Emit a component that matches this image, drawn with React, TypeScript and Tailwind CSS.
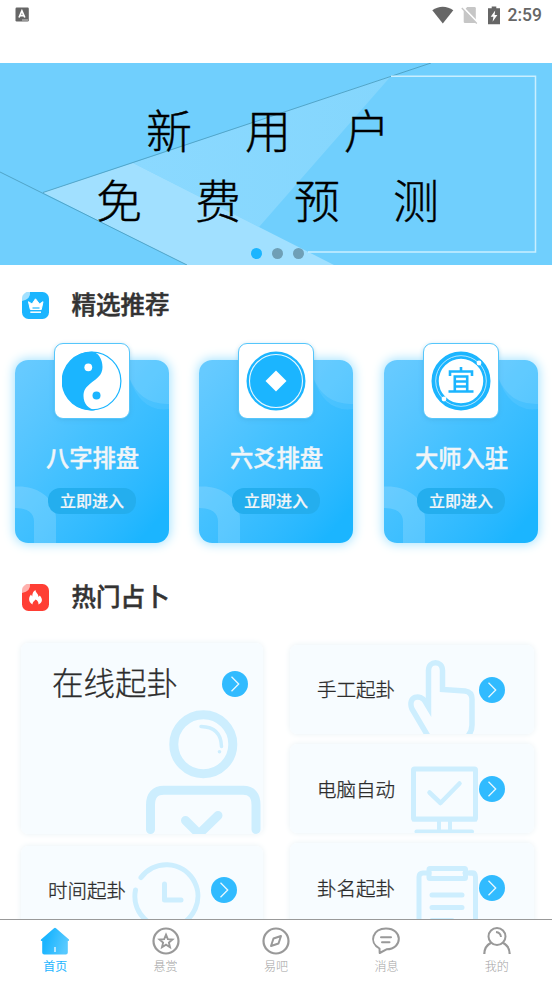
import type { ReactNode } from "react";

const PALE = "#cdeefe";
const BLUE = "#1bb5ff";

function StatusBar() {
  return (
    <div className="flex h-[63px] items-start justify-between pl-[15px] pr-[10px]">
      <svg className="mt-[7px]" width="15" height="15" viewBox="0 0 15 15">
        <rect x="0.5" y="0.5" width="13.3" height="14" rx="1.2" fill="#666" />
        <path d="M4 10.5 6.9 3.8 9.8 10.5M5 8.6h3.8" fill="none" stroke="#fff" strokeWidth="1.7" />
        <path d="M7 13h6" stroke="#ccc" />
      </svg>
      <div className="flex h-[30px] items-center">
        <svg width="22" height="18" viewBox="0 0 22 18">
          <path d="M0.3 4.3C6.5-.6 15 -.6 21.3 4.3L10.8 17.4Z" fill="#666" />
        </svg>
        <svg className="ml-[7px]" width="17" height="18" viewBox="0 0 17 18">
          <path d="M6.2 1H13.500q1.300 0 1.300 1.300v13.400q0 1.300-1.300 1.300H4q-1.300 0-1.300-1.300V4.800Z" fill="#c6c6c6" />
          <path d="M1.800 1.200 16.500 16.500" stroke="#fff" strokeWidth="2" />
          <path d="M.8 2 15.800 17.500" stroke="#c6c6c6" strokeWidth="1.400" />
        </svg>
        <svg className="ml-[10px]" width="12" height="19" viewBox="0 0 12 19">
          <path d="M3.700 0.500h4.600v1.700H12V18.200H0V2.200h3.700Z" fill="#666" />
          <path d="M7.200 4.500 2.700 10.800h2.700L4.600 15.800 9.400 9H6.600Z" fill="#fff" />
        </svg>
        <span className="ml-[8px] font-[Roboto] text-[17.500px] leading-[30px] font-medium text-[#666]">2:59</span>
      </div>
    </div>
  );
}

function Banner() {
  return (
    <div className="relative h-[202px] bg-[#70cffd]">
      <svg className="absolute inset-0" width="552" height="202" viewBox="0 0 552 202">
        <defs>
          <linearGradient id="ray" x1="0" y1="0" x2="1" y2="0">
            <stop offset="0" stopColor="#8bd9ff" />
            <stop offset="1" stopColor="#84d6fd" />
          </linearGradient>
        </defs>
        <path d="M133 100 391 13 259 164Z" fill="url(#ray)" />
        <path d="M43 129.500 133 100 334 202H187Z" fill="#a1e0ff" />
        <path d="M0 109 187 202M43 129.500 431 0" stroke="#4d9fc2" strokeWidth="0.900" fill="none" />
        <path d="M391 13.300H535.500V189H308" stroke="#c9efff" strokeWidth="1.500" fill="none" />
      </svg>
      <div className="relative flex flex-col pt-[30px] pl-[96px] text-[46px] leading-[70px] font-light text-black [-webkit-text-stroke:0.400px_#000]">
        <div className="flex gap-[53px] pl-[50px]">
          {["新", "用", "户"].map((c) => (
            <span key={c}>{c}</span>
          ))}
        </div>
        <div className="flex gap-[53px]">
          {["免", "费", "预", "测"].map((c) => (
            <span key={c}>{c}</span>
          ))}
        </div>
      </div>
      <div className="absolute bottom-[6px] left-[251px] flex gap-[10px]">
        <i className="size-[11px] rounded-full bg-[#1bb5ff]" />
        <i className="size-[11px] rounded-full bg-[#6f9fb6]" />
        <i className="size-[11px] rounded-full bg-[#6f9fb6]" />
      </div>
    </div>
  );
}

function Heading({ color, title, children }: { color: string; title: string; children: ReactNode }) {
  return (
    <div className="flex h-[36px] items-center pl-[22px]">
      <svg width="27" height="27" viewBox="0 0 27 27">
        <rect width="27" height="27" rx="6.500" fill={color} />
        <path d="M0 9V6.500Q0 0 6.500 0H8Q9 7 0 9Z" fill="#fff" opacity="0.6" />
        {children}
      </svg>
      <h2 className="-mt-[2px] ml-[22.500px] text-[24.500px] leading-[36px] font-medium text-[#333] [-webkit-text-stroke:0.500px_#333]">
        {title}
      </h2>
    </div>
  );
}

function YinYang() {
  return (
    <svg width="60" height="60" viewBox="0 0 60 60">
      <circle cx="30" cy="30" r="28.900" fill="#fff" stroke={BLUE} strokeWidth="1.200" />
      <path
        d="M30 .7C36 1 40.500 8 40.500 16C40.500 24 35 27.500 29 32C24 36 21.500 39 21.500 45C21.500 53 27 58 33 59.200A29.400 29.400 0 1 1 30 .7Z"
        fill={BLUE}
      />
      <circle cx="26.300" cy="16.300" r="3.900" fill="#fff" />
      <circle cx="34.500" cy="44.500" r="4" fill={BLUE} />
    </svg>
  );
}

function Coin() {
  return (
    <svg width="60" height="60" viewBox="0 0 60 60">
      <circle cx="30" cy="30" r="29.500" fill={BLUE} />
      <circle cx="30" cy="30" r="26.500" fill="none" stroke="#e6f7ff" strokeWidth="1.100" />
      <path d="M30 19.500 40.500 30 30 40.500 19.500 30Z" fill="#fff" />
    </svg>
  );
}

function Seal() {
  return (
    <svg width="60" height="60" viewBox="0 0 60 60">
      <circle cx="30" cy="30" r="26.500" fill="#fff" stroke={BLUE} strokeWidth="6" />
      <circle cx="30" cy="30" r="25.300" fill="none" stroke="#c5ecff" strokeWidth="0.900" />
      <circle cx="30" cy="30" r="23.200" fill="none" stroke={BLUE} strokeWidth="1.900" />
      <circle cx="48" cy="12" r="2.400" fill="#fff" />
      <circle cx="13" cy="48" r="2.400" fill="#fff" />
      <g fill="none" stroke={BLUE} strokeWidth="2.600">
        <path d="M30 16v4M19 25v-4.500h22V25M17.500 40.500h25M23.800 40V25.500h12.400V40M24 30.500h12M24 35.500h12" />
      </g>
    </svg>
  );
}

function FeatureCard({ title, children }: { title: string; children: ReactNode }) {
  return (
    <div className="relative flex h-[183px] w-[154px] flex-col items-center rounded-[13px] bg-linear-to-br from-[#66caff] from-5% via-[#44c1ff] via-45% to-[#1bb5ff] to-90% shadow-[0_0_11px_1px_#a2e2ff]">
      <svg className="absolute inset-0" width="154" height="183" viewBox="0 0 154 183">
        <path d="M114 0H141Q154 0 154 13V49Q126 53 114 17Z" fill="#fff" opacity="0.07" />
        <path d="M114 0H141Q154 0 154 13V44Q125 45 114 17Z" fill="#fff" opacity="0.10" />
        <path d="M0 126.500C25 125 41 140 41 159V183H19V162Q19 148 0 148Z" fill="#fff" opacity="0.16" />
      </svg>
      <div className="relative -mt-[17px] flex size-[76px] shrink-0 items-center justify-center rounded-[9px] border-[1.500px] border-[#55c6fb] bg-white shadow-[0_1px_4px_#3c9ccc55]">
        {children}
      </div>
      <div className="relative mt-[21px] pl-[1px] text-[23.300px] leading-[35px] font-medium text-[#f1f5f8] [-webkit-text-stroke:0.400px_#f1f5f8]">
        {title}
      </div>
      <div className="relative mt-[13px] h-[26px] w-[88px] rounded-[12px] bg-[#24aeee] text-center text-[16px] leading-[25px] font-medium text-[#f1f5f8] [-webkit-text-stroke:0.200px_#f1f5f8]">
        立即进入
      </div>
    </div>
  );
}

function Arrow() {
  return (
    <svg className="relative shrink-0" width="26" height="26" viewBox="0 0 26 26">
      <circle cx="13" cy="13" r="13" fill="#31bbff" />
      <path d="M9.500 5.800 16.700 13 9.500 20.200" fill="none" stroke="#e8f8ff" strokeWidth="1.300" />
    </svg>
  );
}

const panel = "relative overflow-hidden rounded-[7px] bg-[#f7fcff]";
const shade = "rounded-[7px] shadow-[0_0_6px_#e8f1f5]";

function Panel({
  title,
  box,
  row,
  text,
  art,
}: {
  title: string;
  box: string;
  row: string;
  text: string;
  art: ReactNode;
}) {
  return (
    <div className={shade}>
      <div className={`${panel} ${box}`}>
        {art}
        <div className={`relative flex items-center justify-between ${row}`}>
          <span className={`font-light text-[#2c2c2c] [-webkit-text-stroke:0.300px_#2c2c2c] ${text}`}>{title}</span>
          <Arrow />
        </div>
      </div>
    </div>
  );
}

const artProps = { fill: "none", stroke: PALE, strokeLinecap: "round", strokeLinejoin: "round" } as const;

const personArt = (
  <svg className="absolute inset-0" width="242" height="191" viewBox="0 0 242 191" {...artProps}>
    <circle cx="182.300" cy="101.300" r="29.500" strokeWidth="9" />
    <path d="M180 83.500Q200 84 200.500 103.500" strokeWidth="3.500" />
    <circle cx="198.500" cy="108.700" r="1.800" fill={PALE} stroke="none" />
    <path d="M129.500 186.500V162Q129.500 147.300 143 147.300H222Q235 147.300 235 162V186.500" strokeWidth="9" />
    <path d="M164.500 177.500 178 191 197 172.500" strokeWidth="9" />
  </svg>
);

const handArt = (
  <svg className="absolute inset-0" width="244" height="89" viewBox="0 0 244 89" {...artProps}>
    <path
      d="M138.500 92 122 64C117 51.500 130.500 48 135.500 57L138.500 62V25.500C138.500 15 152.500 15 152.500 25.500V44.500L175 46Q182 47 182 54V80Q182 86 178 91"
      strokeWidth="5.500"
      strokeLinejoin="miter"
    />
  </svg>
);

const monitorArt = (
  <svg className="absolute inset-0" width="244" height="89" viewBox="0 0 244 89" {...artProps}>
    <rect x="123.500" y="25" width="62" height="50" rx="1" strokeWidth="5" />
    <path d="M122 75.500H187M149 77v9M160 77v9" strokeWidth="4" strokeLinecap="butt" />
    <path d="M139.500 48.500 150.500 59 169.500 39.500" strokeWidth="4.500" />
    <path d="M126.500 87.500H182" strokeWidth="4" />
  </svg>
);

const clockArt = (
  <svg className="absolute inset-0" width="242" height="89" viewBox="0 0 242 89" {...artProps}>
    <path d="M120 31.500A31.500 31.500 0 1 1 114.500 44" strokeWidth="5" />
    <path d="M143.500 38V54H160" strokeWidth="5" />
  </svg>
);

const clipboardArt = (
  <svg className="absolute inset-0" width="244" height="89" viewBox="0 0 244 89" {...artProps}>
    <path d="M139 30H133Q129 30 129 34V89M180 30H182Q185.500 30 185.500 34V89" strokeWidth="5" />
    <rect x="139" y="25.500" width="36.500" height="10" rx="1" strokeWidth="5" />
    <path d="M175 30H184M142 52H172M142 64.500H172M142 77.500H162" strokeWidth="5" />
  </svg>
);

function Tab({ label, active, children }: { label: string; active?: boolean; children: ReactNode }) {
  return (
    <div className="flex flex-1 flex-col items-center pt-[6px]">
      <svg width="30" height="30" viewBox="0 0 30 30" fill="none" stroke="#999" strokeWidth="2.200">
        {children}
      </svg>
      <span
        className={`mt-[1px] text-[12px] leading-[18px] ${active ? "font-normal text-[#1bb5ff]" : "font-light text-[#a4a4a4]"}`}
      >
        {label}
      </span>
    </div>
  );
}

export default function App() {
  return (
    <div
      lang="zh-CN"
      className="flex h-[981px] w-[552px] flex-col overflow-hidden bg-white font-['Noto_Sans_CJK_SC',sans-serif]"
    >
      <main className="h-[919px] shrink-0 overflow-hidden">
        <StatusBar />
        <Banner />
        <div className="pt-[22px]">
          <Heading color={BLUE} title="精选推荐">
            <path d="M6.500 9.700 10 12 13.500 6.800 17.500 12 21 9.700 19.300 17.500H8.300Z" fill="#fff" stroke="#fff" strokeLinejoin="round" />
            <path d="M8.300 20.200H19" stroke="#fff" strokeWidth="1.500" />
            <path d="M10.500 16H17.500" stroke={BLUE} strokeWidth="1.200" />
          </Heading>
        </div>
        <div className="flex gap-[30px] pt-[37px] pl-[15px]">
          <FeatureCard title="八字排盘">
            <YinYang />
          </FeatureCard>
          <FeatureCard title="六爻排盘">
            <Coin />
          </FeatureCard>
          <div className="pl-[1px]">
            <FeatureCard title="大师入驻">
              <Seal />
            </FeatureCard>
          </div>
        </div>
        <div className="pt-[36px]">
          <Heading color="#ff3e34" title="热门占卜">
            <path
              d="M10.500 20.500C5.500 17.500 7 12.500 9 10.500L10.200 12.500C10.300 9 11.500 7 13.500 6C13.500 9 16.500 9.500 16.500 13L17.800 11.500C21.500 15.500 20 19 16.500 20.500C16.700 18 15.500 16.500 13.500 15.500C12.700 17 10.500 17.500 10.500 20.500Z"
              fill="#fff"
            />
          </Heading>
        </div>
        <div className="flex gap-[27px] pt-[28px] pl-[21px]">
          <div className="flex w-[242px] flex-col gap-[12px]">
            <Panel
              title="在线起卦"
              box="h-[191px]"
              row="pt-[18px] pl-[31px] pr-[15px]"
              text="-mt-[5px] text-[31.500px] leading-[50px]"
              art={personArt}
            />
            <Panel title="时间起卦" box="h-[89px]" row="h-[88px] pl-[27px] pr-[26px]" text="text-[19.500px] leading-[30px]" art={clockArt} />
          </div>
          <div className="flex w-[244px] flex-col gap-[10px] pt-[2px]">
            <Panel title="手工起卦" box="h-[89px]" row="h-[89px] pl-[27px] pr-[29px]" text="-mt-[1px] text-[19.500px] leading-[30px]" art={handArt} />
            <Panel title="电脑自动" box="h-[89px]" row="h-[89px] pl-[27px] pr-[29px]" text="text-[19.500px] leading-[30px]" art={monitorArt} />
            <Panel title="卦名起卦" box="h-[89px]" row="h-[89px] pl-[27px] pr-[29px]" text="text-[19.500px] leading-[30px]" art={clipboardArt} />
          </div>
        </div>
      </main>
      <nav className="flex h-[62px] shrink-0 border-t border-[#999] bg-white">
        <Tab label="首页" active>
          <defs>
            <linearGradient id="home" x1="0" y1="0" x2="1" y2="0.300">
              <stop offset="0.300" stopColor="#1bb5ff" />
              <stop offset="1" stopColor="#57c9ff" />
            </linearGradient>
          </defs>
          <path
            d="M14 2.200Q15 1.400 16 2.200L29 13.500Q29.500 15 28 15H27.800V26.500Q27.800 28.500 25.800 28.500H4.200Q2.200 28.500 2.200 26.500V15H1.500Q.3 15 1 13.500Z"
            fill="url(#home)"
            stroke="none"
          />
          <path d="M15 21v5" stroke="#d5f1ff" strokeWidth="1.600" />
        </Tab>
        <Tab label="悬赏">
          <circle cx="15" cy="15" r="12.500" />
          <path d="M15 8.700 16.800 13.100 21.500 13.500 17.900 16.600 19 21.200 15 18.700 11 21.200 12.100 16.600 8.500 13.500 13.200 13.100Z" strokeWidth="1.900" />
        </Tab>
        <Tab label="易吧">
          <circle cx="15" cy="15" r="12.500" />
          <path d="M20 10 17.500 17.500 10 20 12.500 12.500Z" strokeWidth="2" strokeLinejoin="round" />
        </Tab>
        <Tab label="消息">
          <path d="M8.500 22.500C-3 16 2 2.500 15 2.500C32 2.500 32 23 15.500 23.300L8.700 27Z" strokeLinejoin="round" strokeWidth="2" />
          <path d="M10 11.300H20M11 16.200H18.500" strokeLinecap="round" strokeWidth="2" />
        </Tab>
        <Tab label="我的">
          <circle cx="15" cy="10.500" r="8.500" strokeWidth="2" />
          <path d="M14 6Q18.500 6.500 19 11" strokeWidth="1.900" />
          <path d="M2.300 28C2.300 22.500 5.500 18.500 9.500 16.500M20.500 16.500C24.500 18.500 27.700 22.500 27.700 28" />
        </Tab>
      </nav>
    </div>
  );
}
